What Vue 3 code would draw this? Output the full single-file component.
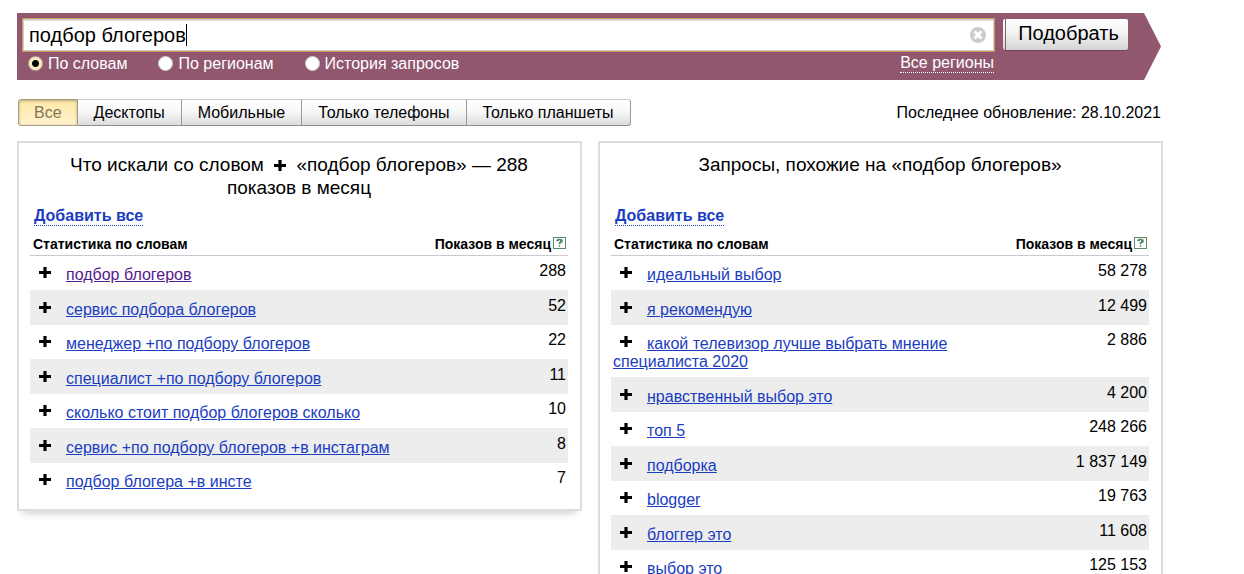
<script setup>
import { ref } from 'vue'

const query = ref('подбор блогеров')
const mode = ref('words')
const activeTab = ref('Все')

const modes = [
  { id: 'words', label: 'По словам' },
  { id: 'regions', label: 'По регионам' },
  { id: 'history', label: 'История запросов' },
]
const tabs = ['Все', 'Десктопы', 'Мобильные', 'Только телефоны', 'Только планшеты']

const panels = [
  {
    id: 'with',
    before: 'Что искали со словом',
    after: '«подбор блогеров» — 288',
    unit: 'показов в месяц',
    rows: [
      { text: 'подбор блогеров', count: '288', visited: true },
      { text: 'сервис подбора блогеров', count: '52' },
      { text: 'менеджер +по подбору блогеров', count: '22' },
      { text: 'специалист +по подбору блогеров', count: '11' },
      { text: 'сколько стоит подбор блогеров сколько', count: '10' },
      { text: 'сервис +по подбору блогеров +в инстаграм', count: '8' },
      { text: 'подбор блогера +в инсте', count: '7' },
    ],
  },
  {
    id: 'similar',
    before: 'Запросы, похожие на «подбор блогеров»',
    rows: [
      { text: 'идеальный выбор', count: '58 278' },
      { text: 'я рекомендую', count: '12 499' },
      { text: 'какой телевизор лучше выбрать мнение специалиста 2020', count: '2 886' },
      { text: 'нравственный выбор это', count: '4 200' },
      { text: 'топ 5', count: '248 266' },
      { text: 'подборка', count: '1 837 149' },
      { text: 'blogger', count: '19 763' },
      { text: 'блоггер это', count: '11 608' },
      { text: 'выбор это', count: '125 153' },
    ],
  },
]
</script>

<template>
  <main class="page">
    <form class="search" @submit.prevent>
      <div class="field-column">
        <div class="field">
          <input v-model="query" class="query" type="text" aria-label="Запрос" autofocus />
          <span class="echo" aria-hidden="true"><span class="echo-text">{{ query }}</span><i class="caret"></i></span>
          <button class="clear" type="button" aria-label="Очистить" @click="query = ''">
            <svg width="16" height="16" viewBox="0 0 16 16">
              <circle cx="8" cy="8" r="8" fill="#ccc" />
              <path d="M4.6 4.6l6.8 6.8M11.4 4.6l-6.8 6.8" stroke="#fff" stroke-width="2.8" />
            </svg>
          </button>
        </div>
        <div class="options">
          <label v-for="m in modes" :key="m.id" class="mode">
            <input v-model="mode" type="radio" name="mode" :value="m.id" />
            <span>{{ m.label }}</span>
          </label>
          <a class="regions" href="#">Все регионы</a>
        </div>
      </div>
      <button class="submit" type="submit">Подобрать</button>
    </form>

    <div class="toolbar">
      <div class="tabs">
        <button
          v-for="t in tabs"
          :key="t"
          type="button"
          :class="['tab', { active: t === activeTab }]"
          @click="activeTab = t"
        >{{ t }}</button>
      </div>
      <span class="updated">Последнее обновление: 28.10.2021</span>
    </div>

    <div class="panels">
      <section v-for="p in panels" :key="p.id" class="panel">
        <h2 class="title">
          <span>{{ p.before }}</span>
          <template v-if="p.after">
            {{ ' ' }}<svg class="title-plus" width="12" height="11" viewBox="0 0 12 11" aria-label="+">
              <path d="M0 4h4.4V0h3.2v4H12v3H7.6v4H4.4V7H0z" />
            </svg>{{ ' ' }}<span>{{ p.after }}</span>
            {{ ' ' }}<span class="unit">{{ p.unit }}</span>
          </template>
        </h2>
        <a class="add-all" href="#">Добавить все</a>
        <table class="stats">
          <thead>
            <tr>
              <th class="phrase" scope="col">Статистика по словам</th>
              <th class="count" scope="col">
                Показов в месяц<svg class="help" width="13" height="12" viewBox="0 0 13 12" aria-label="Справка">
                  <rect x=".5" y=".5" width="12" height="11" fill="#fff" stroke="#5a8a6a" />
                  <path d="M4 4.2V3.2h1.2V2.5h2.6v.7H9v1.6H7.5v1H6.5v1.4M6.5 8.2v1.6" fill="none" stroke="#4d8560" stroke-width="1.4" />
                </svg>
              </th>
            </tr>
          </thead>
          <tbody>
            <tr v-for="r in p.rows" :key="r.text">
              <td class="phrase">
                <button class="add" type="button" :aria-label="'Добавить ' + r.text">
                  <svg width="12" height="11" viewBox="0 0 12 11">
                    <path d="M0 4h4.4V0h3.2v4H12v3H7.6v4H4.4V7H0z" />
                  </svg>
                </button><a :class="{ visited: r.visited }" href="#">{{ r.text }}</a>
              </td>
              <td class="count">{{ r.count }}</td>
            </tr>
          </tbody>
        </table>
      </section>
    </div>
  </main>
</template>

<style>
html {
  scrollbar-width: none;
}
body {
  margin: 0;
  background: #fff;
}
</style>

<style scoped>
.page {
  padding: 13px 81px 24px 17px;
  font: 16px/18px "Liberation Sans", Arial, sans-serif;
  color: #000;
}
.page * {
  box-sizing: border-box;
}
button,
input {
  font-family: inherit;
  margin: 0;
}
.search {
  display: flex;
  align-items: flex-start;
  gap: 8px;
  height: 67px;
  margin-right: 2px;
  padding: 5px 33px 0 5px;
  background: #90576f;
  clip-path: polygon(0 0, calc(100% - 17px) 0, 100% 50%, calc(100% - 17px) 100%, 0 100%);
}
.field-column {
  flex: 1;
}
.field {
  position: relative;
}
.query {
  display: block;
  width: 100%;
  height: 34px;
  padding: 0 36px 0 6px;
  border: 1px solid #cf9a55;
  border-radius: 1px;
  outline: 0;
  background: #fff;
  box-shadow: inset 0 0 0 1px #ccc, inset 0 2px 1px #ddd;
  font-size: 20px;
  color: #000;
  caret-color: transparent;
}
.echo {
  position: absolute;
  top: 6px;
  left: 7px;
  display: flex;
  font-size: 20px;
  pointer-events: none;
}
.echo-text {
  visibility: hidden;
}
.caret {
  width: 1px;
  height: 22px;
  background: #000;
}
.clear {
  position: absolute;
  top: 9px;
  right: 9px;
  padding: 0;
  border: 0;
  background: none;
}
.clear svg {
  display: block;
}
.options {
  display: flex;
  align-items: center;
  gap: 31px;
  padding: 2px 1px 0 6px;
  color: #fff;
}
.mode {
  display: flex;
  align-items: center;
  gap: 5px;
}
.mode input {
  appearance: none;
  width: 15px;
  height: 15px;
  border: 1px solid #ccc;
  border-radius: 50%;
  background: #fff;
}
.mode input:checked {
  border-color: #b8aa91;
  background: radial-gradient(circle, #000 0 3px, #faebc7 4px);
}
.regions {
  margin-left: auto;
  border-bottom: 1px dotted #fff;
  color: #fff;
  text-decoration: none;
}
.submit {
  flex: none;
  width: 125px;
  height: 31px;
  margin-top: 1px;
  padding: 0 0 2px 6px;
  border: 0;
  border-radius: 2px;
  background:
    linear-gradient(#90576f, #90576f) 2px 0 / 1px 100% no-repeat,
    linear-gradient(#fff, #f5f5f5 40%, #d4d4d4);
  box-shadow: 0 1px 0 #6d4757;
  font-size: 20px;
}
.toolbar {
  display: flex;
  justify-content: space-between;
  align-items: flex-start;
  margin: 19px 2px 15px 1px;
}
.tabs {
  display: flex;
}
.tab {
  height: 27px;
  padding: 0 16px;
  border: 1px solid #ccc;
  border-bottom-color: #8c8c8c;
  border-left: 0;
  border-right-color: #999;
  background: linear-gradient(#fff, #f8f8f8 45%, #dcdcdc);
  font-size: 16px;
  line-height: 24px;
}
.tab:last-child {
  border-radius: 0 3px 3px 0;
}
.tab.active {
  padding: 1px 15px 0;
  border: 1px solid #a79d81;
  border-radius: 3px 0 0 3px;
  background: linear-gradient(#ffe9a8, #fff2cc);
  box-shadow: inset 0 1px 3px #b5a577;
  color: #80765a;
}
.updated {
  padding-top: 5px;
}
.panels {
  display: grid;
  grid-template-columns: 1fr 1fr;
  gap: 16px;
  align-items: start;
}
.panel {
  padding: 10px 12px 12px 11px;
  border: 2px solid #ddd;
  border-radius: 1px;
  box-shadow: 0 8px 8px -6px #ccc;
}
.title {
  min-height: 46px;
  margin: 0 24px 8px;
  font-size: 19px;
  line-height: 23px;
  font-weight: 400;
  text-align: center;
}
.title-plus {
  margin: 0 5px;
}
.unit {
  white-space: nowrap;
}
.add-all {
  display: inline-block;
  margin-left: 4px;
  border-bottom: 1px dotted #1a3dc1;
  color: #1a3dc1;
  font-weight: 700;
  text-decoration: none;
}
.stats {
  width: 100%;
  margin-top: 4px;
  border-collapse: collapse;
  table-layout: fixed;
}
th {
  padding: 5px 2px 2px 3px;
  border-bottom: 1px solid #c9c9d3;
  font-size: 14px;
  text-align: left;
  vertical-align: top;
}
.count {
  width: 160px;
  text-align: right;
}
.help {
  margin-left: 2px;
}
td {
  padding: 10px 2px 6px;
  vertical-align: top;
}
td.count {
  padding-top: 6px;
}
tbody tr:nth-child(even) {
  background: #ededed;
}
tbody tr:nth-child(even) td {
  padding-top: 11px;
}
tbody tr:nth-child(even) td.count {
  padding-top: 7px;
}
.add {
  margin: 0 15px 0 7px;
  padding: 0;
  border: 0;
  background: none;
  line-height: 11px;
  vertical-align: 2px;
}
.add svg {
  display: block;
}
td a {
  color: #1a3dc1;
}
td a.visited {
  color: #551a8b;
}
</style>
